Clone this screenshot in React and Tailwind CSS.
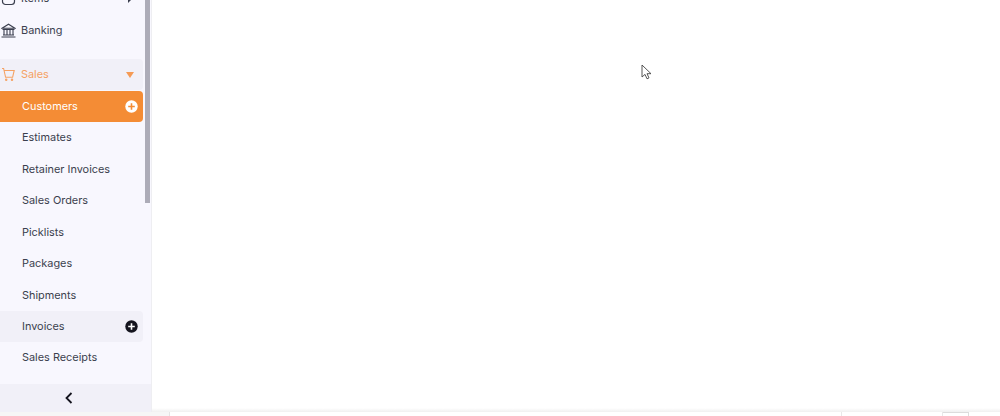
import React from "react";

function Plus({ dark }) {
  return (
    <svg width="13" height="13" viewBox="0 0 13 13" className="shrink-0">
      <circle cx="6.5" cy="6.5" r="6.2" fill={dark ? "#14141e" : "#ffffff"} />
      <path d="M6.5 3.2v6.6M3.2 6.5h6.6" stroke={dark ? "#ffffff" : "#f48c35"} strokeWidth="1.6" />
    </svg>
  );
}

function Row({ label }) {
  return (
    <div className="h-[31.5px] flex items-center pl-[22px] text-[10.9px] text-[#3b3f4e] shrink-0">{label}</div>
  );
}

export default function App() {
  return (
    <div className="w-[1000px] h-[416px] overflow-hidden bg-white flex flex-col font-['Inter',sans-serif]">
      <div className="flex h-[412px] shrink-0">
        <aside className="w-[152px] h-full bg-[#f8f7fe] border-r border-[#eeeef2] flex flex-col shrink-0 overflow-hidden">
          <div className="flex flex-1 min-h-0">
            <nav className="w-[143px] shrink-0 flex flex-col">
              <div className="h-[15px] -mt-[9px] flex items-center justify-between pl-[1px] pr-[10px] mb-[9px] text-[10.9px] text-[#3b3f4e] shrink-0">
                <div className="flex items-center gap-[5px]">
                  <svg width="15" height="15" viewBox="0 0 15 15" fill="none" stroke="#3b3f4e" strokeWidth="1.2"><rect x="1.5" y="2" width="12" height="11.5" rx="3" /><path d="M4.5 8h6" /></svg>
                  <span>Items</span>
                </div>
                <svg width="6" height="8" viewBox="0 0 6 8"><path d="M1 0l4 4-4 4z" fill="#3b3f4e" /></svg>
              </div>
              <div className="h-[31px] flex items-center gap-[5px] pl-[1px] text-[10.9px] text-[#3b3f4e] shrink-0">
                <svg width="15" height="15" viewBox="0 0 15 15" fill="none" stroke="#3b3f4e" strokeWidth="1.1"><path d="M1 5.2L7.5 1.2 14 5.2zM1.5 6.5h12M3 7v4.8M6 7v4.8M9 7v4.8M12 7v4.8M2 12h11M.5 14h14" /></svg>
                <span>Banking</span>
              </div>
              <div className="mt-[13px] h-[31px] rounded-r-[4px] bg-[#f1f0f8] flex items-center justify-between pl-[1px] pr-[9px] text-[10.9px] text-[#f5a264] shrink-0">
                <div className="flex items-center gap-[5px]">
                  <svg width="15" height="15" viewBox="0 0 15 15" fill="none" stroke="#f5a264" strokeWidth="1.1"><path d="M1 1.5h1.6l2 8.8h7l1.6-6.8H3.2" /><circle cx="5.2" cy="12.8" r=".7" /><circle cx="11" cy="12.8" r=".7" /></svg>
                  <span>Sales</span>
                </div>
                <svg width="8" height="6" viewBox="0 0 8 6"><path d="M0 0h8L4 6z" fill="#f59a55" /></svg>
              </div>
              <div className="h-[30.5px] mt-[1px] rounded-r-[4px] bg-[#f48c35] flex items-center justify-between pl-[22px] pr-[5px] text-[10.9px] text-white shrink-0">
                <span>Customers</span>
                <Plus />
              </div>
              <Row label="Estimates" />
              <Row label="Retainer Invoices" />
              <Row label="Sales Orders" />
              <Row label="Picklists" />
              <Row label="Packages" />
              <Row label="Shipments" />
              <div className="h-[31px] rounded-r-[4px] bg-[#f1f0f8] flex items-center justify-between pl-[22px] pr-[5px] text-[10.9px] text-[#3b3f4e] shrink-0">
                <span>Invoices</span>
                <Plus dark />
              </div>
              <Row label="Sales Receipts" />
            </nav>
            <div className="w-[8px] shrink-0 flex justify-center">
              <div className="w-[5px] h-[203px] bg-[#adacb8]" />
            </div>
          </div>
          <div className="h-[28px] bg-[#f1f0f8] flex items-center justify-start pl-[65px] shrink-0">
            <svg width="8" height="12" viewBox="0 0 8 12" fill="none" stroke="#14141e" strokeWidth="1.8"><path d="M6.5 1L1.5 6l5 5" /></svg>
          </div>
        </aside>
        <main className="flex-1 relative flex flex-col justify-end">
          <svg className="absolute left-[489px] top-[64px]" width="12" height="17" viewBox="0 0 12 17" fill="#fff" stroke="#444" strokeWidth="0.9"><path d="M1 1v12l3-2.6 2 4.4 2-.9-2-4.2h4z" /></svg>
          <div className="h-[4px] bg-gradient-to-b from-white to-[#f0f0f0]" />
        </main>
      </div>
      <div className="h-[4px] shrink-0 flex bg-white">
        <div className="w-[170px] h-full bg-[#f6f6f6] border-r border-[#e4e4e4]" />
        <div className="w-[672px] h-full border-r border-[#e8e8e8]" />
        <div className="w-[101px] h-full border-r border-[#e8e8e8]" />
        <div className="w-[26px] h-full border-t border-r border-[#dcdcdc]" />
      </div>
    </div>
  );
}
